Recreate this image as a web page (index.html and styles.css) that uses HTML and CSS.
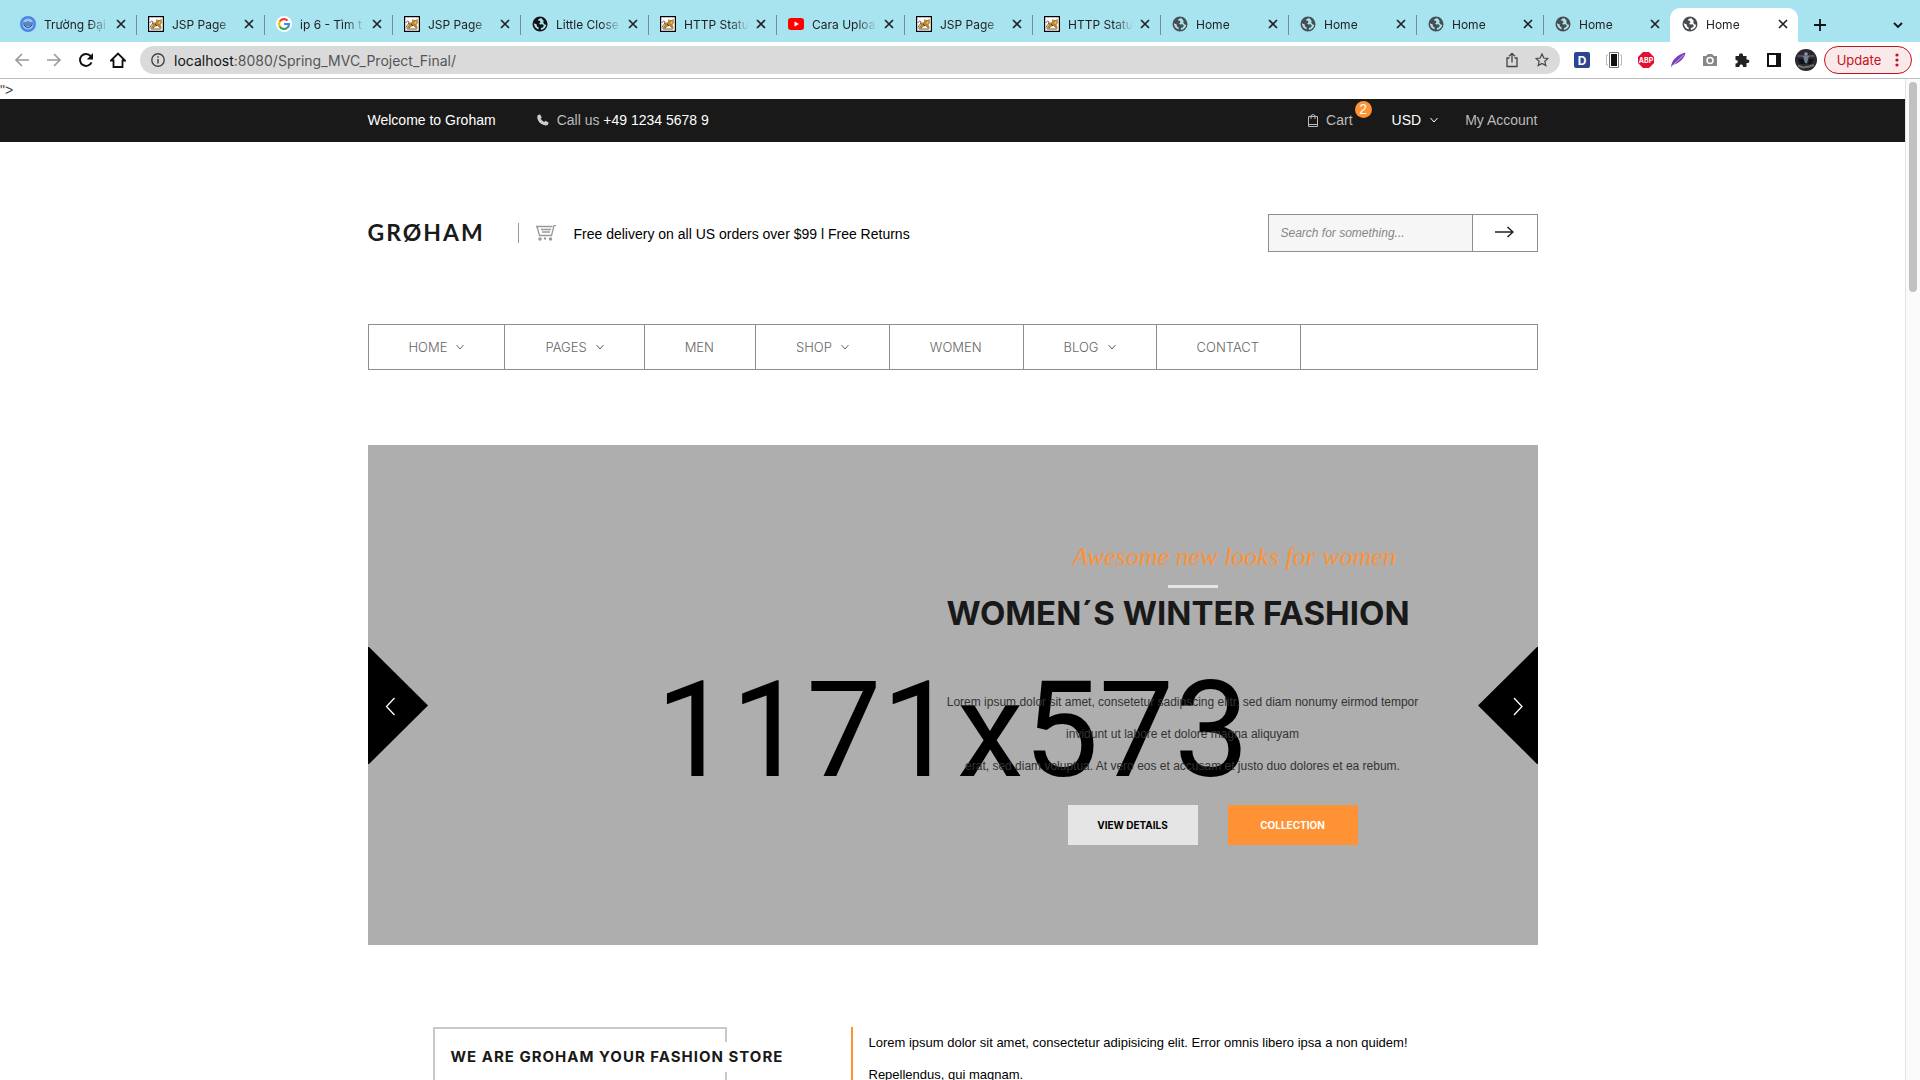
FILE: index.html
```html
<!DOCTYPE html>
<html lang="en">
<head>
<meta charset="utf-8">
<title>Home</title>
<link rel="stylesheet" href="styles.css">
</head>
<body>
<svg class="defs" width="0" height="0" aria-hidden="true">
  <symbol id="close" viewBox="0 0 12 12"><path d="M2 2l8 8M10 2l-8 8" stroke="#222" stroke-width="1.700" fill="none"/></symbol>
  <symbol id="globe" viewBox="0 0 16 16"><circle cx="8" cy="8" r="7.500" fill="currentColor"/><path d="M9.500 2.200C7.500 2 6 3 5.800 4.500l2 .3.700 1.400-1.300 1.300.8.900 2.500-.2 1.300 1.300-.8 1.700-2 .8-.2 1.800c3 .1 5-2.300 5.300-5l-1.500-.4-1.300-1.700.3-1.900zM1.800 7.200c.2 3 2 5.300 4.700 6.200l.2-2-1.700-1-.3-2z" fill="var(--globe-land)"/></symbol>
  <symbol id="tomcat" viewBox="0 0 16 16"><path d="M.6.600h14.800v14.800H.6z" fill="#fff" stroke="#000" stroke-width="1.200"/><path d="M8.500 3l1.500 1h2L13.500 2.500 14 7l-1.500 1.500 1.500 4-2.500-.5-2-2-2 .5-2 2H2l2.500-3 .5-2.500 3-1z" fill="#b9832c"/><path d="M1.800 7c1.500-3 3.500-2 3 0s-2 2-2.800 4.500M3 13h10M7 8l2 2M10 6h2.500" stroke="#333" stroke-width=".8" fill="none"/><path d="M9.500 6.500l2.500-1.500 1 1.500-2 1.500z" fill="#e8c45c"/></symbol>
  <symbol id="chev" viewBox="0 0 10 10"><path d="M1.500 3l3.500 4 3.500-4" fill="none" stroke="currentColor"/></symbol>
</svg>

<div class="browser">
  <div class="tabs">
    <div class="tab"><svg class="fav" viewBox="0 0 16 16"><circle cx="8" cy="8" r="8" fill="#4d86e0"/><circle cx="8" cy="8" r="5.500" fill="#9cc3f3"/><path d="M4 6v3q4 5 8 0V6M6 6v4M8 5v5M10 6v4" stroke="#174a92" fill="none"/></svg><span class="name">Trường Đại</span><button aria-label="Close tab"><svg><use href="#close"/></svg></button></div>
    <div class="tab"><svg class="fav"><use href="#tomcat"/></svg><span class="name">JSP Page</span><button aria-label="Close tab"><svg><use href="#close"/></svg></button></div>
    <div class="tab"><svg class="fav" viewBox="0 0 16 16"><circle cx="8" cy="8" r="8" fill="#fff"/><g fill="none" stroke-width="2.200"><path d="M11.500 4.500A5 5 0 0 0 3.700 5.500" stroke="#ea4335"/><path d="M3.700 5.500a5 5 0 0 0 0 5" stroke="#fbbc05"/><path d="M3.700 10.500a5 5 0 0 0 7.500 1.300" stroke="#34a853"/><path d="M11.200 11.800A5 5 0 0 0 13 8H8" stroke="#4285f4"/></g></svg><span class="name">ip 6 - Tìm t</span><button aria-label="Close tab"><svg><use href="#close"/></svg></button></div>
    <div class="tab"><svg class="fav"><use href="#tomcat"/></svg><span class="name">JSP Page</span><button aria-label="Close tab"><svg><use href="#close"/></svg></button></div>
    <div class="tab"><svg class="fav dark"><use href="#globe"/></svg><span class="name">Little Close</span><button aria-label="Close tab"><svg><use href="#close"/></svg></button></div>
    <div class="tab"><svg class="fav"><use href="#tomcat"/></svg><span class="name">HTTP Statu</span><button aria-label="Close tab"><svg><use href="#close"/></svg></button></div>
    <div class="tab"><svg class="fav" viewBox="0 0 16 16"><rect y="2" width="16" height="12" rx="3" fill="#f00"/><path d="M6.500 5.500v5L11 8z" fill="#fff"/></svg><span class="name">Cara Uploa</span><button aria-label="Close tab"><svg><use href="#close"/></svg></button></div>
    <div class="tab"><svg class="fav"><use href="#tomcat"/></svg><span class="name">JSP Page</span><button aria-label="Close tab"><svg><use href="#close"/></svg></button></div>
    <div class="tab"><svg class="fav"><use href="#tomcat"/></svg><span class="name">HTTP Statu</span><button aria-label="Close tab"><svg><use href="#close"/></svg></button></div>
    <div class="tab"><svg class="fav"><use href="#globe"/></svg><span class="name">Home</span><button aria-label="Close tab"><svg><use href="#close"/></svg></button></div>
    <div class="tab"><svg class="fav"><use href="#globe"/></svg><span class="name">Home</span><button aria-label="Close tab"><svg><use href="#close"/></svg></button></div>
    <div class="tab narrow"><svg class="fav"><use href="#globe"/></svg><span class="name">Home</span><button aria-label="Close tab"><svg><use href="#close"/></svg></button></div>
    <div class="tab narrow last"><svg class="fav"><use href="#globe"/></svg><span class="name">Home</span><button aria-label="Close tab"><svg><use href="#close"/></svg></button></div>
    <div class="tab active"><svg class="fav"><use href="#globe"/></svg><span class="name">Home</span><button aria-label="Close tab"><svg><use href="#close"/></svg></button></div>
    <button class="newtab" aria-label="New tab"><svg width="14" height="14" viewBox="0 0 14 14"><path d="M7 1v12M1 7h12" stroke="#111" stroke-width="1.800"/></svg></button>
    <button class="tablist" aria-label="Search tabs"><svg width="12" height="12" viewBox="0 0 12 12"><path d="M2 4l4 4 4-4" stroke="#111" stroke-width="1.800" fill="none"/></svg></button>
  </div>
  <div class="toolbar">
    <div class="moves">
      <button aria-label="Back"><svg viewBox="0 0 16 16"><path d="M15 8H2M8 2L2 8l6 6" stroke="#999" stroke-width="1.600" fill="none"/></svg></button>
      <button aria-label="Forward"><svg viewBox="0 0 16 16"><path d="M1 8h13M8 2l6 6-6 6" stroke="#999" stroke-width="1.600" fill="none"/></svg></button>
      <button aria-label="Reload"><svg viewBox="0 0 16 16"><path d="M13.500 10.300A6 6 0 1 1 12.700 4.200" stroke="#111" stroke-width="2" fill="none"/><path d="M15 1v6.500H8.800z" fill="#111"/></svg></button>
      <button aria-label="Home page"><svg viewBox="0 0 16 16"><path d="M1 8.500l7-7 7 7h-2.500V15h-9V8.500z" stroke="#111" stroke-width="1.800" fill="none"/></svg></button>
    </div>
    <div class="omni">
      <svg width="14" height="14" viewBox="0 0 14 14"><circle cx="7" cy="7" r="6.200" fill="none" stroke="#444" stroke-width="1.400"/><path d="M7 6v4.500M7 3.300v1.500" stroke="#444" stroke-width="1.500"/></svg>
      <span class="url"><b>localhost</b>:8080/Spring_MVC_Project_Final/</span>
      <button aria-label="Share"><svg width="14" height="16" viewBox="0 0 14 16"><path d="M4.500 6H2v8.500h10V6H9.500M7 10.500V1.500M4 4.300l3-3 3 3" fill="none" stroke="#444" stroke-width="1.300"/></svg></button>
      <button aria-label="Bookmark"><svg width="14" height="14" viewBox="0 0 14 14"><path d="M7 1l1.800 4 4.200.400-3.200 2.900 1 4.300L7 10.400l-3.800 2.200 1-4.300L1 5.400 5.200 5z" fill="none" stroke="#444" stroke-width="1.200"/></svg></button>
    </div>
    <div class="exts">
      <button class="ext-d" aria-label="Dictionary">D</button>
      <button aria-label="Film extension"><svg viewBox="0 0 16 16"><path d="M3.500.500h9v15h-9z" fill="#fff" stroke="#777"/><path d="M5 2h6v12H5z" fill="#111"/><path d="M2 3H.5v10H2M14 3h1.500v10H14" fill="none" stroke="#bbb"/></svg></button>
      <button class="ext-abp" aria-label="Ad blocker"><svg viewBox="0 0 16 16"><path d="M5 0h6l5 5v6l-5 5H5l-5-5V5z" fill="#e40d31"/><text x="8" y="11" text-anchor="middle">ABP</text></svg></button>
      <button aria-label="Feather extension"><svg viewBox="0 0 16 16"><path d="M1 15.500C1.500 8 7 3 15.500.500 15 6 9 11.500 3 13z" fill="#7d3fb8"/><path d="M1.500 14.500Q8 9 13.500 3" stroke="#d7bff0" stroke-width=".9" fill="none"/></svg></button>
      <button aria-label="Camera extension"><svg viewBox="0 0 16 16"><path d="M1 4h3l2-2h4l2 2h3v10H1z" fill="#888"/><circle cx="8" cy="8.500" r="3" fill="none" stroke="#fff" stroke-width="1.500"/></svg></button>
      <button aria-label="Extensions"><svg viewBox="0 0 16 16"><path d="M1.500 4H5c-.8-3.800 4.800-3.800 4 0h3.500v3.500c3.800-.8 3.800 4.300 0 3.500V15H9c.4-3.200-3.900-3.200-3.500 0h-4v-3.600c3 .4 3-3.800 0-3.400z" fill="#222"/></svg></button>
      <button aria-label="Side panel"><svg viewBox="0 0 16 16"><path d="M2 2h12v12H2z" fill="#fff" stroke="#111" stroke-width="2"/><path d="M10 2h4v12h-4z" fill="#111"/></svg></button>
    </div>
    <button class="avatar" aria-label="Profile"><svg width="22" height="22" viewBox="0 0 22 22"><circle cx="11" cy="11" r="11" fill="#292833"/><path d="M2.500 7h17" stroke="#6b5a5c" stroke-width="1.500"/><path d="M3 16.500l5 2 6-1 5-1.500" stroke="#75705c" stroke-width="2" fill="none"/><circle cx="11" cy="5" r="1.800" fill="#8e9aac"/><path d="M8 7h6l-2 7h-2z" fill="#6f819b"/><path d="M3 10h5l2 5H5zM14 10h5l-3 5h-3z" fill="#111118"/></svg></button>
    <button class="update">Update <svg width="4" height="14" viewBox="0 0 4 14"><g fill="#c5131c"><circle cx="2" cy="2" r="1.600"/><circle cx="2" cy="7" r="1.600"/><circle cx="2" cy="12" r="1.600"/></g></svg></button>
  </div>
</div>

<div class="viewport">
  <div class="page">
    <div class="stray">"&gt;</div>
    <div class="topbar">
      <div class="container">
        <span class="welcome">Welcome to Groham</span>
        <svg class="phone" width="12" height="12" viewBox="0 0 12 12"><path d="M.5 1.500L3 .3 4.800 3.500 3.600 4.600q1.200 2.200 3.600 3.300L8.400 6.800l3.200 1.700-.8 2.600C5 13-1 6.500.5 1.500z" fill="#ccc"/></svg>
        <span class="call">Call us <a href="tel:+49123456789">+49 1234 5678 9</a></span>
        <a class="cart" href="#cart"><svg width="10" height="13" viewBox="0 0 10 13"><path d="M.5 2.500h9v10h-9zM3 5V1.500Q5-.5 7 1.500V5M.5 10.500h9" fill="none" stroke="#bbb"/></svg>Cart<span class="badge">2</span></a>
        <button class="currency">USD <svg width="10" height="10"><use href="#chev"/></svg></button>
        <a class="account" href="#account">My Account</a>
      </div>
    </div>

    <header class="container masthead">
      <a class="logo" href="#home">GRØHAM</a>
      <div class="delivery">
        <svg width="20" height="16" viewBox="0 0 20 16"><path d="M0 1.500h16.500M1 1.500l2.500 9h12L18 .700h2M5 4.500h10M6 7h8" fill="none" stroke="#999" stroke-width="1.300"/><circle cx="4" cy="14" r="1.700" fill="#999"/><circle cx="9" cy="13.500" r="1.200" fill="#999"/><circle cx="14.500" cy="14" r="1.700" fill="#999"/></svg>
        <span>Free delivery on all US orders over $99 l Free Returns</span>
      </div>
      <form class="search">
        <input type="text" aria-label="Search" placeholder="Search for something...">
        <button type="button" aria-label="Submit search"><svg width="19" height="12" viewBox="0 0 19 12"><path d="M0 6h18M12.500 1l5.500 5-5.500 5" fill="none" stroke="#222" stroke-width="1.500"/></svg></button>
      </form>
    </header>

    <nav class="container menu">
      <a href="#home">HOME<svg><use href="#chev"/></svg></a>
      <a href="#pages">PAGES<svg><use href="#chev"/></svg></a>
      <a href="#men">MEN</a>
      <a href="#shop">SHOP<svg><use href="#chev"/></svg></a>
      <a href="#women">WOMEN</a>
      <a href="#blog">BLOG<svg><use href="#chev"/></svg></a>
      <a href="#contact">CONTACT</a>
    </nav>

    <section class="container hero">
      <div class="placeholder">1171x573</div>
      <button class="arrow prev" aria-label="Previous slide"><svg width="60" height="117" viewBox="0 0 60 117"><path d="M0 0h1l59 58.500L1 117H0z" fill="#000"/><path d="M26.500 51L18.500 59.500l8 8.500" fill="none" stroke="#fff" stroke-width="1.300"/></svg></button>
      <div class="caption">
        <p class="script">Awesome new looks for women</p>
        <div class="rule"></div>
        <h1>WOMEN´S WINTER FASHION</h1>
        <p class="copy">Lorem ipsum dolor sit amet, consetetur sadipscing elitr, sed diam nonumy eirmod tempor<br>invidunt ut labore et dolore magna aliquyam<br>erat, sed diam voluptua. At vero eos et accusam et justo duo dolores et ea rebum.</p>
        <div class="actions"><button class="light">VIEW DETAILS</button><button class="orange">COLLECTION</button></div>
      </div>
      <button class="arrow next" aria-label="Next slide"><svg width="60" height="117" viewBox="0 0 60 117"><path d="M60 0h-1L0 58.500 59 117h1z" fill="#000"/><path d="M36 51l8 8.500-8 8.500" fill="none" stroke="#fff" stroke-width="1.300"/></svg></button>
    </section>

    <section class="container about">
      <div class="frame"><h2>WE ARE GROHAM YOUR FASHION STORE</h2></div>
      <p>Lorem ipsum dolor sit amet, consectetur adipisicing elit. Error omnis libero ipsa a non quidem!<br>Repellendus, qui magnam.</p>
    </section>
  </div>
  <div class="scrollbar"><div class="thumb"></div></div>
</div>
</body>
</html>
```

FILE: styles.css
```css
* { box-sizing: border-box; }
body { margin: 0; height: 100vh; display: flex; flex-direction: column; overflow: hidden; background: #fff; font-family: "Liberation Sans", Arial, sans-serif; font-size: 14px; color: #000; }
button { border: 0; padding: 0; background: none; font: inherit; color: inherit; display: flex; align-items: center; justify-content: center; }
a { color: inherit; text-decoration: none; }
p, h1, h2 { margin: 0; }
svg { display: block; flex: none; }
.defs { position: absolute; }

.browser { flex: none; font-family: Inter, "Liberation Sans", sans-serif; border-bottom: 1px solid #bdbdbd; }
.tabs { height: 42px; background: #a8e3f0; display: flex; align-items: flex-end; padding-left: 8px; --globe-land: #a8e3f0; }
.tab { height: 34px; flex: 0 1 128px; display: flex; align-items: center; gap: 8px; padding: 0 9px 2px 12px; position: relative; font-size: 12px; color: #222; }
.tab.narrow { flex-basis: 127px; }
.tab::after { content: ""; position: absolute; right: -1px; top: 7px; width: 1px; height: 20px; background: #6d8e96; }
.tab.last::after, .tab.active::after { display: none; }
.tab.active { background: #fff; border-radius: 10px 10px 0 0; --globe-land: #fff; }
.fav { width: 16px; height: 16px; color: #4a4d50; }
.fav.dark { color: #111; }
.name { flex: 1; min-width: 0; overflow: hidden; white-space: nowrap; mask-image: linear-gradient(to right, #000 calc(100% - 20px), transparent); }
.tab button { margin-left: -2px; }
.tab button svg { width: 12px; height: 12px; }
.newtab { width: 28px; height: 34px; margin-left: 8px; }
.tablist { width: 28px; height: 34px; margin: 0 8px 0 auto; }
.toolbar { height: 36px; display: flex; align-items: center; padding: 0 8px 0 14px; }
.moves { display: flex; gap: 16px; width: 126px; flex: none; }
.moves svg { width: 16px; height: 16px; }
.omni { flex: 1; height: 28px; border-radius: 14px; background: #dadada; display: flex; align-items: center; gap: 16px; padding: 0 11px; }
.url { flex: 1; font-size: 14px; color: #555; margin-left: -7px; }
.url b { font-weight: 400; color: #111; }
.exts { display: flex; gap: 16px; margin: 0 13px 0 14px; }
.exts button, .exts svg { width: 16px; height: 16px; }
.exts .ext-d { background: #2c458f; color: #fff; border-radius: 2px; font-weight: 700; font-size: 12px; }
.ext-abp text { fill: #fff; font-weight: 700; font-size: 7px; }
.avatar { width: 22px; margin-right: 7px; }
.update { height: 28px; width: 88px; border: 1px solid #c5131c; border-radius: 14px; background: #fae9ea; color: #c5131c; font-size: 13px; gap: 14px; }

.viewport { flex: 1; display: flex; min-height: 0; }
.page { flex: 1; min-width: 0; overflow: hidden; }
.scrollbar { flex: none; width: 15px; border-left: 1px solid #e4e4e4; background: #fafafa; padding: 3px; }
.thumb { width: 8px; height: 210px; border-radius: 4px; background: #c1c1c1; }
.container { width: 1170px; max-width: 100%; margin-left: auto; margin-right: auto; }
.stray { height: 20px; line-height: 22px; color: #444; }
.topbar { background: #191919; height: 43px; color: #fff; }
.topbar .container { display: flex; align-items: center; height: 42px; }
.phone { margin: 0 8px 0 41px; }
.call { color: #bbb; }
.call a { color: #fff; }
.cart { margin-left: auto; color: #bbb; display: flex; align-items: center; gap: 8px; position: relative; }
.badge { position: absolute; right: -19px; top: -11px; width: 17px; height: 17px; border-radius: 50%; background: #fe9234; color: #fff; line-height: 17px; text-align: center; }
.currency { margin-left: 39px; gap: 8px; }
.account { margin-left: 26px; color: #bbb; }

.masthead { display: flex; align-items: center; height: 38px; margin-top: 72px; }
.logo { width: 150px; font-family: Lato, sans-serif; font-weight: 700; font-size: 23px; letter-spacing: 2px; line-height: 36px; height: 38px; color: #1a1a1a; }
.delivery { display: flex; align-items: center; gap: 18px; height: 20px; line-height: 18px; border-left: 1px solid #999; padding-left: 17px; }
.delivery span { padding-top: 2px; }
.search { display: flex; margin-left: auto; width: 270px; height: 38px; border: 1px solid #8e8e8e; }
.search input { width: 204px; border: 0; border-right: 1px solid #8e8e8e; border-radius: 0; background: #f6f6f6; padding: 0 12px; font: italic 12px "Liberation Sans", Arial, sans-serif; }
.search input::placeholder { color: #858585; }
.search button { flex: 1; padding-bottom: 2px; }

.menu { display: flex; height: 46px; margin-top: 72px; border: 1px solid #8e8e8e; font-family: Inter, sans-serif; font-weight: 300; font-size: 13px; color: #666; }
.menu a { display: flex; align-items: center; gap: 8px; padding: 0 41px 0 40px; border-right: 1px solid #8e8e8e; }
.menu svg { width: 10px; height: 10px; margin-right: -2px; }

.hero { position: relative; display: flex; align-items: center; height: 500px; margin-top: 75px; background: #aeaeae; }
.placeholder { position: absolute; inset: 70px 0 0; display: flex; align-items: center; justify-content: center; font-family: Roboto, sans-serif; font-size: 134px; }
.arrow { position: relative; margin-top: 20px; }
.next { margin-left: auto; }
.caption { position: relative; margin-left: 519px; align-self: flex-start; width: 472px; padding-top: 92px; text-align: center; }
.script { font: italic 26px/40px "Z003", "URW Chancery L", "Liberation Serif", serif; color: #fe9234; padding-left: 126px; text-align: left; white-space: nowrap; }
.rule { width: 50px; height: 3px; background: #e5e5e5; margin: 8px auto 5px 221px; }
.caption h1 { font: 700 33px/40px Inter, sans-serif; color: #191919; text-align: left; white-space: nowrap; }
.copy { margin-top: 53px; font-size: 12px; line-height: 32px; color: #333; white-space: nowrap; }
.actions { display: flex; gap: 30px; padding-left: 121px; margin-top: 23px; }
.actions button { width: 130px; height: 40px; font: 700 10px Inter, sans-serif; }
.actions .light { background: #e5e5e5; }
.actions .orange { background: #fe9234; color: #fff; }
.caption { margin-left: 519px; }
.prev + .caption { flex: none; }

.about { display: flex; margin-top: 82px; padding-left: 65px; }
.frame { width: 294px; height: 120px; border: 2px solid #c8c8c8; margin-right: 124px; padding-top: 13px; flex: none; }
.frame h2 { width: max-content; background: #fff; margin-left: 16px; font: 700 15px/30px Inter, sans-serif; letter-spacing: 1px; color: #191919; }
.about p { border-left: 2px solid #fe9234; padding-left: 16px; line-height: 32px; font-size: 13px; }
```
